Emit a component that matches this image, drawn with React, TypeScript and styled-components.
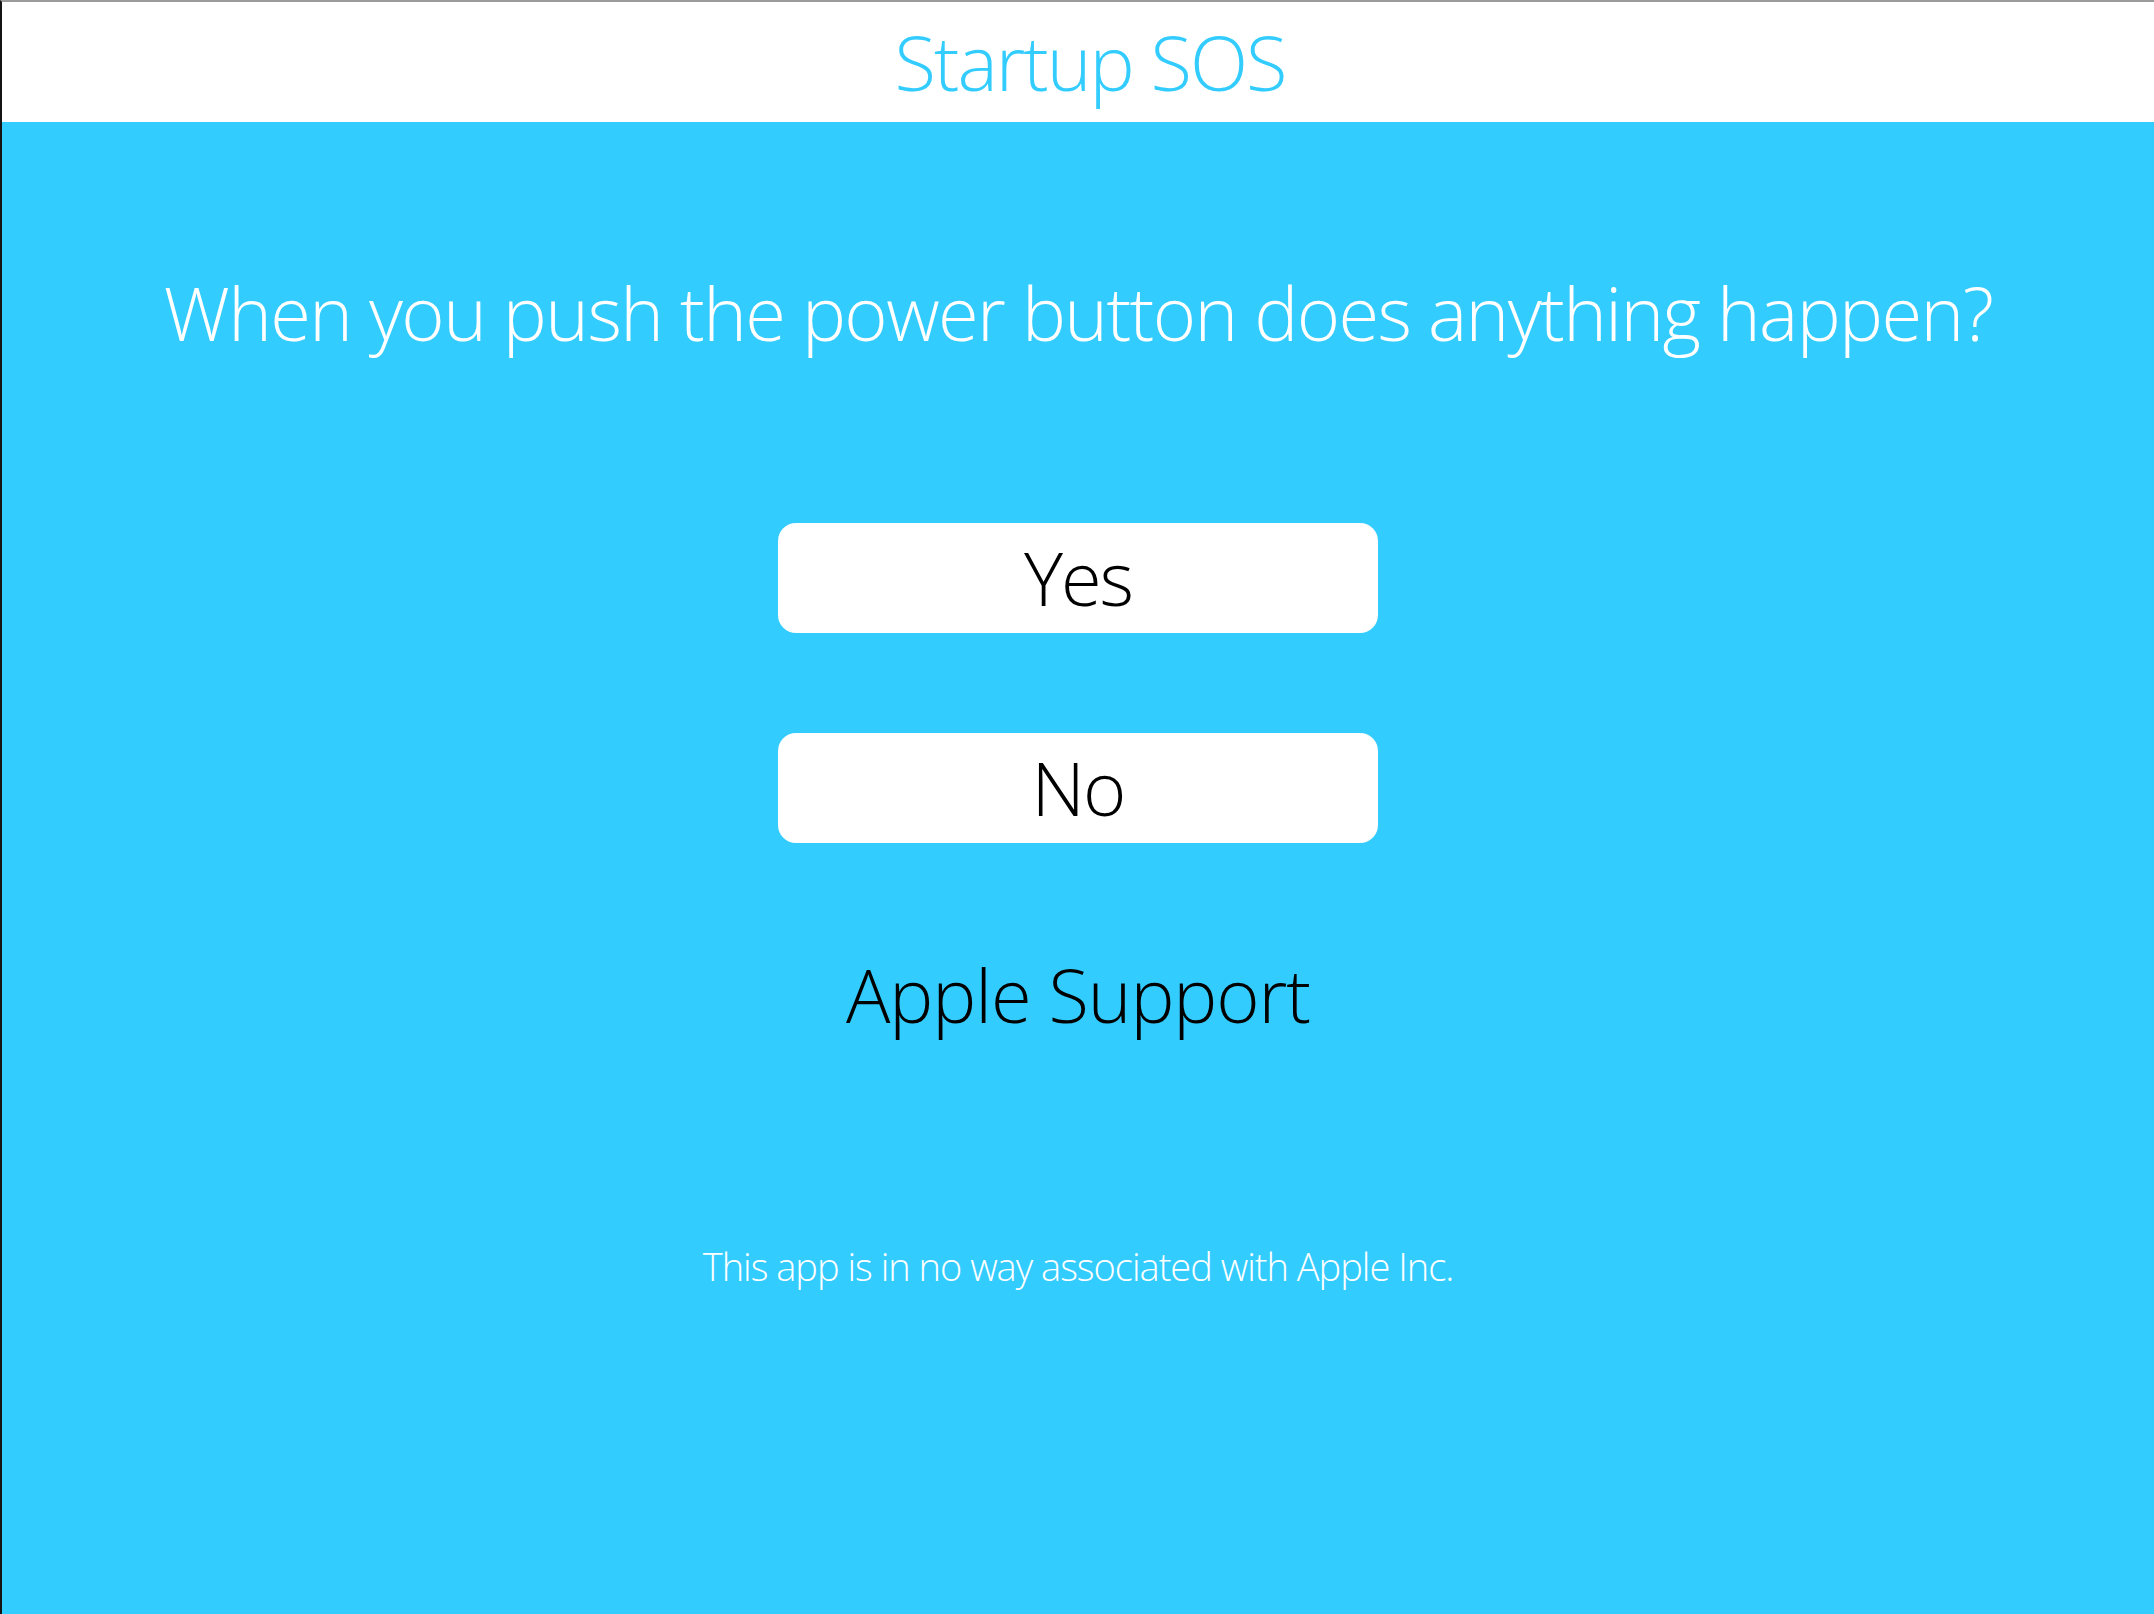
import styled, { createGlobalStyle } from 'styled-components'

const GlobalStyle = createGlobalStyle`
  html, body {
    margin: 0;
    padding: 0;
    height: 100%;
  }
  body {
    font-family: "Open Sans", "Liberation Sans", sans-serif;
    font-weight: 300;
    background: #33ccff;
  }
  #root {
    height: 100%;
  }
`

const Screen = styled.div`
  box-sizing: border-box;
  height: 100vh;
  display: flex;
  flex-direction: column;
  border-top: 2px solid #9b9b9b;
  border-left: 2px solid #141414;
  background: #33ccff;
`

const Header = styled.header`
  flex: 0 0 120px;
  display: flex;
  align-items: center;
  justify-content: center;
  background: #ffffff;
`

const Title = styled.h1`
  margin: 0;
  padding-left: 24px;
  font-size: 76px;
  font-weight: 300;
  letter-spacing: -2px;
  color: #33ccff;
  line-height: 1;
`

const Main = styled.main`
  flex: 1;
  display: flex;
  flex-direction: column;
  align-items: center;
  padding-top: 154px;
`

const Question = styled.h2`
  margin: 0 0 173px;
  font-size: 74px;
  font-weight: 300;
  letter-spacing: -1.6px;
  color: #ffffff;
  line-height: 1;
  text-align: center;
`

const Choices = styled.div`
  display: flex;
  flex-direction: column;
  gap: 100px;
`

const Choice = styled.button`
  width: 600px;
  height: 110px;
  border: none;
  border-radius: 18px;
  background: #ffffff;
  color: #000000;
  font-family: inherit;
  font-size: 74px;
  font-weight: 300;
  letter-spacing: -2px;
  line-height: 1;
  cursor: pointer;
`

const SupportLink = styled.a`
  margin-top: 115px;
  font-size: 74px;
  font-weight: 300;
  letter-spacing: -1.1px;
  line-height: 1;
  color: #000000;
  text-decoration: none;
`

const Disclaimer = styled.p`
  margin: 215px 0 0;
  font-size: 38px;
  font-weight: 300;
  letter-spacing: -1px;
  color: #ffffff;
  line-height: 1;
`

export default function App() {
  return (
    <>
      <GlobalStyle />
      <Screen>
        <Header>
          <Title>Startup SOS</Title>
        </Header>
        <Main>
          <Question>When you push the power button does anything happen?</Question>
          <Choices>
            <Choice>Yes</Choice>
            <Choice>No</Choice>
          </Choices>
          <SupportLink href="#">Apple Support</SupportLink>
          <Disclaimer>This app is in no way associated with Apple Inc.</Disclaimer>
        </Main>
      </Screen>
    </>
  )
}
